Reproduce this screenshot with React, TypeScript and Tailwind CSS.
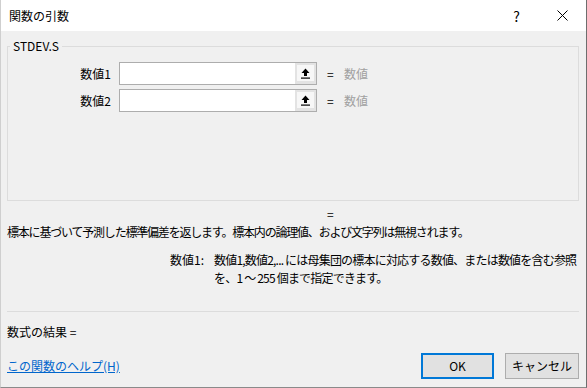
import React from "react"

const font = "font-['Yu_Gothic_UI','Noto_Sans_CJK_JP',sans-serif]"

function RefButton() {
    return (
        <div className="w-[21px] h-full bg-[#e3e3e3] p-[2px] pb-[3px] flex">
            <div className="flex-1 bg-[#f7f7f7] flex items-center justify-center">
                <svg width="9" height="11" viewBox="0 0 9 11">
                    <path d="M4.5 0.5 L8.5 5 H6 V8 H3 V5 H0.5 Z" fill="#000" />
                    <rect x="0" y="9.5" width="9" height="1.2" fill="#000" />
                </svg>
            </div>
        </div>
    )
}

function ArgRow({ label }: { label: string }) {
    return (
        <div className="flex items-center h-[23px]">
            <span className="w-[101px] text-right mr-[8px]">{label}</span>
            <div className="w-[198px] h-full border border-[#adadad] bg-white flex justify-end">
                <RefButton />
            </div>
            <span className="ml-[10px] w-[17px]">=</span>
            <span className="text-[#a0a0a0]">数値</span>
        </div>
    )
}

export default function App() {
    return (
        <div className={`${font} text-[12px] leading-[16px] text-black w-[587px] h-[388px] flex flex-col bg-[#f0f0f0] border-r border-b border-r-[#6e6e6e] border-b-[#8a8a8a] border-l border-l-[#cfcfcf] overflow-hidden`}>
            {/* title bar */}
            <div className="h-[31px] bg-white flex items-center pl-[8px]">
                <span>関数の引数</span>
                <span className="ml-auto mr-[37px] text-[14px]">?</span>
                <svg width="11" height="11" viewBox="0 0 11 11" className="mr-[18px]">
                    <path d="M0.5 0.5 L10.5 10.5 M10.5 0.5 L0.5 10.5" stroke="#000" strokeWidth="1" />
                </svg>
            </div>

            <div className="flex-1 flex flex-col pl-[6px] pr-[7px] pt-[7px]">
                <fieldset className="border border-[#dcdcdc] h-[163px] pl-[2px]">
                    <legend className="px-[3px]">STDEV.S</legend>
                    <div className="pt-[8px] flex flex-col gap-[4px]">
                        <ArgRow label="数値1" />
                        <ArgRow label="数値2" />
                    </div>
                </fieldset>

                <div className="mt-[5px] pl-[320px]">=</div>

                <div className="mt-[2px] whitespace-nowrap tracking-[-1.2px]">
                    標本に基づいて予測した標準偏差を返します。標本内の論理値、および文字列は無視されます。
                </div>

                <div className="mt-[11px] flex leading-[18px] pl-[163px]">
                    <span className="w-[44px] shrink-0 whitespace-nowrap">数値1:</span>
                    <span className="shrink-0 whitespace-nowrap tracking-[-0.8px]">
                        数値1,数値2,... には母集団の標本に対応する数値、または数値を含む参照
                        <br />
                        を、1 ～ 255 個まで指定できます。
                    </span>
                </div>

                <div className="mt-[24px] h-px bg-[#dcdcdc]" />

                <div className="mt-[12px]">数式の結果 =</div>

                <div className="mt-[13px] h-[26px] flex items-center">
                    <a href="#" className="text-[#0066cc] underline">この関数のヘルプ(H)</a>
                    <button className="ml-auto w-[73px] h-full border-2 border-[#0078d7] bg-[#e1e1e1]">OK</button>
                    <button className="ml-[11px] w-[74px] h-full border border-[#adadad] bg-[#e1e1e1]">キャンセル</button>
                </div>
            </div>
        </div>
    )
}
